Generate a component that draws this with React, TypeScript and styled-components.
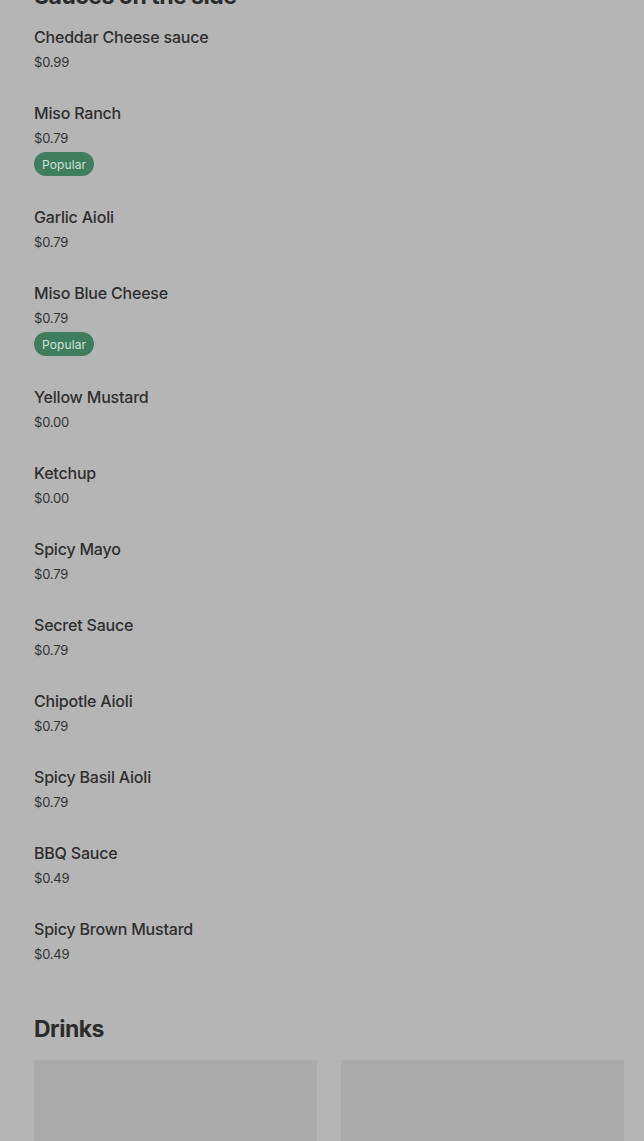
import React from 'react';
import styled, { createGlobalStyle } from 'styled-components';

const GlobalStyle = createGlobalStyle`
  html, body {
    margin: 0;
    padding: 0;
    background-color: #b5b5b5;
    overflow: hidden;
  }
  body {
    font-family: Inter, 'Liberation Sans', Arial, sans-serif;
    color: #2f2f2f;
  }
`;

const Page = styled.div`
  padding: 0 20px 0 34px;
  margin-top: -18px;
`;

const SectionTitle = styled.h2`
  margin: 0;
  font-size: 23px;
  line-height: 29px;
  font-weight: 700;
  letter-spacing: -0.5px;
  color: #2c2c2c;
`;

const ItemList = styled.div`
  display: flex;
  flex-direction: column;
`;

const Item = styled.div`
  display: flex;
  flex-direction: column;
  align-items: flex-start;
  padding: 16px 0 15px;
`;

const ItemName = styled.div`
  font-size: 16px;
  line-height: 20px;
  font-weight: 500;
  letter-spacing: -0.2px;
  color: #2f2f2f;
`;

const ItemPrice = styled.div`
  margin-top: 5px;
  font-size: 13px;
  line-height: 20px;
  letter-spacing: -0.2px;
  color: #333333;
`;

const Badge = styled.span`
  margin-top: 4px;
  height: 24px;
  padding: 0 8px;
  display: inline-flex;
  align-items: center;
  border-radius: 12px;
  background-color: #3f7d5f;
  color: #cfe1d6;
  font-size: 12px;
  letter-spacing: 0.1px;
`;

const DrinksSection = styled.section`
  margin-top: 36px;
`;

const CardGrid = styled.div`
  margin-top: 16px;
  display: grid;
  grid-template-columns: 1fr 1fr;
  gap: 24px;
`;

const Card = styled.div`
  height: 120px;
  background-color: #aaaaaa;
  border-top: 1px solid #adadad;
`;

type Sauce = { name: string; price: string; popular?: boolean };

const sauces: Sauce[] = [
  { name: 'Cheddar Cheese sauce', price: '$0.99' },
  { name: 'Miso Ranch', price: '$0.79', popular: true },
  { name: 'Garlic Aioli', price: '$0.79' },
  { name: 'Miso Blue Cheese', price: '$0.79', popular: true },
  { name: 'Yellow Mustard', price: '$0.00' },
  { name: 'Ketchup', price: '$0.00' },
  { name: 'Spicy Mayo', price: '$0.79' },
  { name: 'Secret Sauce', price: '$0.79' },
  { name: 'Chipotle Aioli', price: '$0.79' },
  { name: 'Spicy Basil Aioli', price: '$0.79' },
  { name: 'BBQ Sauce', price: '$0.49' },
  { name: 'Spicy Brown Mustard', price: '$0.49' },
];

export default function App() {
  return (
    <>
      <GlobalStyle />
      <Page>
        <SectionTitle>Sauces on the side</SectionTitle>
        <ItemList>
          {sauces.map(s => (
            <Item key={s.name}>
              <ItemName>{s.name}</ItemName>
              <ItemPrice>{s.price}</ItemPrice>
              {s.popular && <Badge>Popular</Badge>}
            </Item>
          ))}
        </ItemList>
        <DrinksSection>
          <SectionTitle>Drinks</SectionTitle>
          <CardGrid>
            <Card />
            <Card />
          </CardGrid>
        </DrinksSection>
      </Page>
    </>
  );
}
